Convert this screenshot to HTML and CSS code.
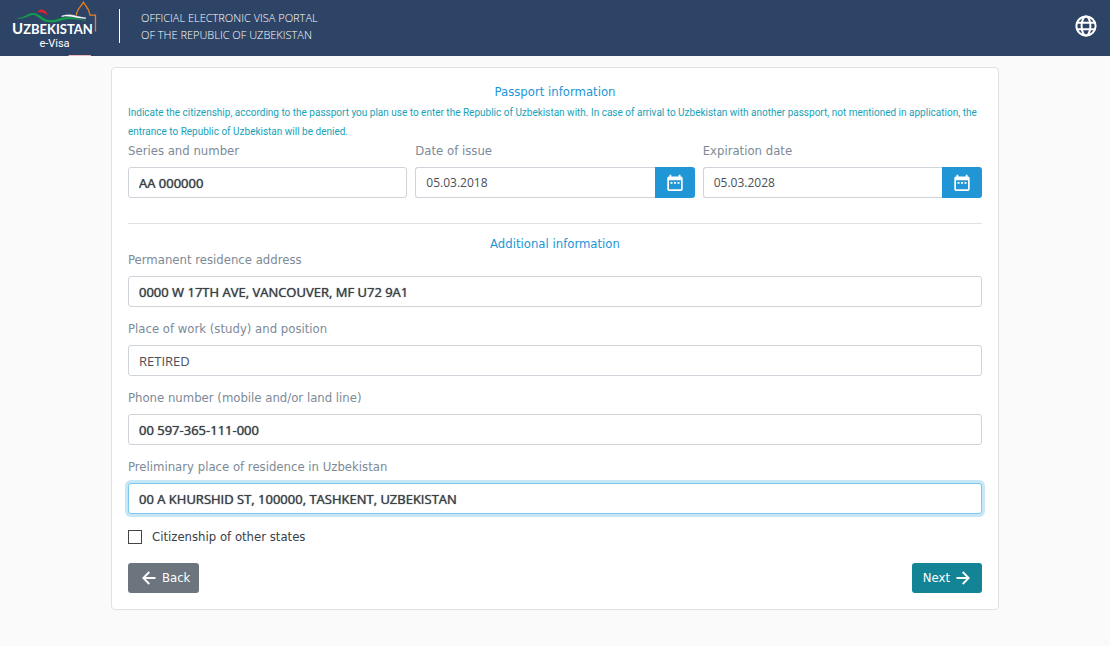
FILE: index.html
```html
<!DOCTYPE html>
<html lang="en">
<head>
<meta charset="utf-8">
<title>e-Visa application</title>
<link rel="stylesheet" href="styles.css">
</head>
<body>
<header class="header">
  <a class="logo" href="#" aria-label="Uzbekistan e-Visa">
    <svg width="100" height="56" viewBox="0 0 100 56" fill="none" stroke-linecap="round">
      <path d="M37.500 12.500C39 7.500 46.500 8.500 47.500 15.800C45 13 42 11.500 37.500 12.500Z" fill="#e0202c"/>
      <path d="M17.500 18.300C25 18 28 12.800 34 13.200C40 14 43 20.300 50 20.300C58 20.500 60 17 68 17.200C76 17.500 80 20 86 20.800C78 19 73 18.800 68 19C60 19.800 57 22.800 49 22C41 21.500 38 15 33.500 14.800C28 15 25 19.200 17.500 18.300Z" fill="#14a04a" stroke="#14a04a" stroke-width=".4"/>
      <path d="M62 16.200C70 13 75 16.500 86 18.200C77 18.500 72 15 62 16.200Z" fill="#fff" stroke="#fff" stroke-width=".7"/>
      <path d="M76.500 14.500C77 9 81 6.500 83.500 2.200C86 7 89.500 8.500 90 15.200H95.500V31" stroke="#ef7d1a" stroke-width="1.300"/>
      <text x="12" y="34" class="logo-name"><tspan class="logo-initial">U</tspan>ZBEKISTAN</text>
      <text x="54.500" y="47" text-anchor="middle" class="logo-sub">e-Visa</text>
      <path d="M69 55.500H90.500" stroke="#f0b9bf" stroke-width="1"/>
    </svg>
  </a>
  <p class="portal">OFFICIAL ELECTRONIC VISA PORTAL<br>OF THE REPUBLIC OF UZBEKISTAN</p>
  <button class="language" type="button" aria-label="Language">
    <svg width="24" height="24" viewBox="0 0 24 24" fill="none" stroke="currentColor" stroke-width="2">
      <circle cx="12" cy="12" r="9.600"/><ellipse cx="12" cy="12" rx="4.400" ry="9.600"/><path d="M3 8.700H21M3 15.300H21"/>
    </svg>
  </button>
</header>
<main class="card">
  <form>
    <h2 class="title">Passport information</h2>
    <p class="note">Indicate the citizenship, according to the passport you plan use to enter the Republic of Uzbekistan with. In case of arrival to Uzbekistan with another passport, not mentioned in application, the entrance to Republic of Uzbekistan will be denied.</p>
    <div class="columns">
      <div class="field">
        <label for="series">Series and number</label>
        <input class="input strong" id="series" type="text" value="AA 000000">
      </div>
      <div class="field">
        <label for="issue">Date of issue</label>
        <div class="date">
          <input class="input" id="issue" type="text" value="05.03.2018">
          <button class="calendar" type="button" aria-label="Choose date of issue">
            <svg width="18" height="18" viewBox="0 0 18 18"><path fill="currentColor" fill-rule="evenodd" d="M3.500 .8H5.300V2.500H12.700V.8H14.500V2.500H15Q16.700 2.500 16.700 4.200V15.300Q16.700 17 15 17H3Q1.300 17 1.300 15.300V4.200Q1.300 2.500 3 2.500H3.500ZM3 6.300V15.300H15V6.300ZM4.500 8H6.500V9.700H4.500ZM8 8H10V9.700H8ZM11.500 8H13.500V9.700H11.500Z"/></svg>
          </button>
        </div>
      </div>
      <div class="field">
        <label for="expiry">Expiration date</label>
        <div class="date">
          <input class="input" id="expiry" type="text" value="05.03.2028">
          <button class="calendar" type="button" aria-label="Choose expiration date">
            <svg width="18" height="18" viewBox="0 0 18 18"><path fill="currentColor" fill-rule="evenodd" d="M3.500 .8H5.300V2.500H12.700V.8H14.500V2.500H15Q16.700 2.500 16.700 4.200V15.300Q16.700 17 15 17H3Q1.300 17 1.300 15.300V4.200Q1.300 2.500 3 2.500H3.500ZM3 6.300V15.300H15V6.300ZM4.500 8H6.500V9.700H4.500ZM8 8H10V9.700H8ZM11.500 8H13.500V9.700H11.500Z"/></svg>
          </button>
        </div>
      </div>
    </div>
    <hr class="rule">
    <h2 class="title">Additional information</h2>
    <div class="stack">
      <div class="field">
        <label for="address">Permanent residence address</label>
        <input class="input strong" id="address" type="text" value="0000 W 17TH AVE, VANCOUVER, MF U72 9A1">
      </div>
      <div class="field">
        <label for="work">Place of work (study) and position</label>
        <input class="input" id="work" type="text" value="RETIRED">
      </div>
      <div class="field">
        <label for="phone">Phone number (mobile and/or land line)</label>
        <input class="input strong" id="phone" type="text" value="00 597-365-111-000">
      </div>
      <div class="field">
        <label for="stay">Preliminary place of residence in Uzbekistan</label>
        <input class="input strong active" id="stay" type="text" value="00 A KHURSHID ST, 100000, TASHKENT, UZBEKISTAN">
      </div>
    </div>
    <div class="check">
      <input id="other" type="checkbox">
      <label for="other">Citizenship of other states</label>
    </div>
    <div class="actions">
      <button class="button back" type="button">
        <svg width="14" height="14" viewBox="0 0 14 14" fill="none" stroke="currentColor" stroke-width="1.800"><path d="M13.500 7H1.800M7.300 1L1.300 7L7.300 13"/></svg>
        Back
      </button>
      <button class="button next" type="submit">
        Next
        <svg width="14" height="14" viewBox="0 0 14 14" fill="none" stroke="currentColor" stroke-width="1.800"><path d="M.5 7H12.200M6.700 1L12.700 7L6.700 13"/></svg>
      </button>
    </div>
  </form>
</main>
</body>
</html>
```
FILE: styles.css
```css
* {
  box-sizing: border-box;
}

body {
  margin: 0;
  background: #fafafa;
  color: #495057;
  font: 13px/16px "DejaVu Sans Condensed", "Open Sans", sans-serif;
}

button,
input {
  font: inherit;
}

.header {
  display: flex;
  align-items: center;
  height: 56px;
  padding: 0 12px 4px 0;
  background: #2d4466;
  color: #fff;
}

.logo {
  display: block;
  align-self: flex-start;
  height: 56px;
}

.logo-name {
  fill: #fff;
  font: 700 13px Lato, sans-serif;
}

.logo-initial {
  font-size: 15px;
}

.logo-sub {
  fill: #fff;
  font: 11px Roboto, sans-serif;
}

.portal {
  margin: 0 auto 0 19px;
  padding-left: 21px;
  border-left: 1px solid #fff;
  font: 300 11px/17px "Open Sans", sans-serif;
}

.language {
  display: flex;
  padding: 0;
  border: 0;
  background: none;
  color: #fff;
}

.card {
  width: 80%;
  margin: 11px auto 36px;
  padding: 16px;
  border: 1px solid #dfe1e3;
  border-radius: 4px;
  background: #fff;
}

.title {
  margin: 0;
  color: #2196d6;
  font-size: 13px;
  font-weight: 400;
  text-align: center;
}

.note {
  margin: 3px 0 2px;
  color: #17a2b8;
  font-family: Roboto, sans-serif;
  font-size: 10px;
  line-height: 19px;
}

.columns {
  display: grid;
  grid-template-columns: repeat(3, minmax(0, 1fr));
  gap: 8px;
}

.field {
  display: flex;
  flex-direction: column;
  gap: 8px;
  color: #7d8a97;
}

.input {
  flex: 1;
  min-width: 0;
  min-height: 31px;
  padding: 0 10px;
  border: 1px solid #ced4da;
  border-radius: 3px;
  background: #fff;
  color: #495057;
  font-family: "Open Sans", sans-serif;
  font-size: 13px;
  outline: 0;
}

.strong {
  color: #3a4046;
  text-shadow: 0 0 1px #3a4046;
}

.active,
.input:focus {
  border-color: #7cc8ef;
  box-shadow: 0 0 0 3px #c7e6f6;
}

.date {
  display: flex;
}

.date .input {
  border-right: 0;
  border-radius: 3px 0 0 3px;
  font-size: 12px;
}

.calendar {
  display: flex;
  align-items: center;
  justify-content: center;
  width: 40px;
  padding: 0;
  border: 0;
  border-radius: 0 3px 3px 0;
  background: #2196d6;
  color: #fff;
}

.rule {
  height: 1px;
  margin: 25px 0 12px;
  border: 0;
  background: #dfe1e3;
}

.stack {
  display: grid;
  gap: 14px;
}

.check {
  display: flex;
  align-items: center;
  gap: 10px;
  margin: 15px 0 18px;
  color: #3a4046;
}

.check input {
  appearance: none;
  width: 14px;
  height: 14px;
  margin: 0;
  border: 1px solid #444;
  background: #fff;
}

.check input:checked {
  background: #2196d6;
}

.actions {
  display: flex;
  justify-content: space-between;
}

.button {
  display: flex;
  align-items: center;
  gap: 6px;
  height: 30px;
  border: 0;
  border-radius: 3px;
  color: #fff;
}

.back {
  padding: 0 9px 0 14px;
  background: #6c757d;
}

.next {
  padding: 0 12px 0 11px;
  background: #138496;
}
```
